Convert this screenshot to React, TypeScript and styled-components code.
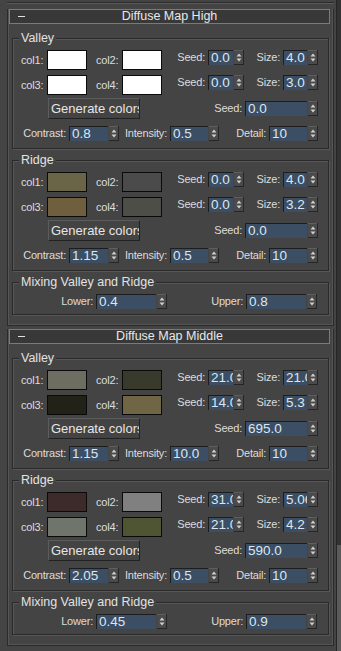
import React from "react";
import styled, { createGlobalStyle } from "styled-components";

const GlobalStyle = createGlobalStyle`
  html, body {
    margin: 0;
    padding: 0;
    background: #444444;
  }
  body {
    font-family: "Liberation Sans", Arial, sans-serif;
  }
`;

type Layer = {
  title: string;
  colors: string[];
  seeds: string[];
  sizes: string[];
  seed: string;
  contrast: string;
  intensity: string;
  detail: string;
};

type MapData = {
  title: string;
  valley: Layer;
  ridge: Layer;
  lower: string;
  upper: string;
};

const maps: MapData[] = [
  {
    title: "Diffuse Map High",
    valley: {
      title: "Valley",
      colors: ["#ffffff", "#ffffff", "#ffffff", "#ffffff"],
      seeds: ["0.0", "0.0"],
      sizes: ["4.0", "3.0"],
      seed: "0.0",
      contrast: "0.8",
      intensity: "0.5",
      detail: "10",
    },
    ridge: {
      title: "Ridge",
      colors: ["#6b6547", "#4b4b4b", "#6f5f3f", "#4c4e47"],
      seeds: ["0.0", "0.0"],
      sizes: ["4.0", "3.2"],
      seed: "0.0",
      contrast: "1.15",
      intensity: "0.5",
      detail: "10",
    },
    lower: "0.4",
    upper: "0.8",
  },
  {
    title: "Diffuse Map Middle",
    valley: {
      title: "Valley",
      colors: ["#6d6d61", "#383b2b", "#222219", "#706545"],
      seeds: ["21.0", "14.0"],
      sizes: ["21.0", "5.3"],
      seed: "695.0",
      contrast: "1.15",
      intensity: "10.0",
      detail: "10",
    },
    ridge: {
      title: "Ridge",
      colors: ["#3d2a2b", "#808080", "#6f756a", "#4f5532"],
      seeds: ["31.0", "21.0"],
      sizes: ["5.06", "4.2"],
      seed: "590.0",
      contrast: "2.05",
      intensity: "0.5",
      detail: "10",
    },
    lower: "0.45",
    upper: "0.9",
  },
];

const Screen = styled.div`
  display: flex;
  width: 341px;
  height: 651px;
  overflow: hidden;
  background: #444444;
`;

const Column = styled.div`
  width: 336px;
  flex: none;
`;

const PrevEdge = styled.div`
  margin: 2px 2px 5px 7px;
  height: 0;
  border-top: 1px solid #2b2b2b;
  border-bottom: 1px solid #5a5a5a;
`;

const ScrollTrack = styled.div`
  width: 5px;
  flex: none;
  background: #333333;
  border-left: 1px solid #262626;
`;

const ScrollThumb = styled.div`
  margin-top: 545px;
  height: 106px;
  background: #5a5a5a;
`;

const RolloutBox = styled.section`
  width: 327px;
  box-sizing: border-box;
  margin: 0 0 3px 7px;
  padding: 0 3px 10px 1px;
  border: 1px solid #2a2a2a;
  border-top: none;
  box-shadow: inset 1px 0 0 #555555, inset -1px 0 0 #555555,
    inset 0 -1px 0 #555555;
`;

const Header = styled.div`
  display: grid;
  grid-template-columns: 24px 1fr 24px;
  align-items: center;
  height: 15px;
  box-sizing: border-box;
  border: 1px solid #7a7a7a;
  background: #383838;
  color: #e8e8e8;
  font-size: 12.5px;
`;

const Collapse = styled.span`
  width: 7px;
  height: 1px;
  margin-left: 8px;
  background: #e0e0e0;
`;

const HeaderTitle = styled.span`
  text-align: center;
  line-height: 13px;
  white-space: nowrap;
`;

const Group = styled.div<{ $gap: number; $pad: number }>`
  width: 317px;
  box-sizing: border-box;
  margin: ${(p) => p.$gap}px 0 0 3px;
  padding-bottom: ${(p) => p.$pad}px;
  border: 1px solid #2a2a2a;
  box-shadow: inset 1px 1px 0 #575757, 1px 1px 0 #575757;
`;

const GroupTitle = styled.div`
  width: fit-content;
  margin: -8px 0 5px 6px;
  padding: 0 2px;
  background: #444444;
  color: #e2e2e2;
  font-size: 12.5px;
  line-height: 14px;
  white-space: nowrap;
`;

const Row = styled.div<{ $top?: number; $left?: number; $top_align?: boolean }>`
  display: flex;
  align-items: ${(p) => (p.$top_align ? "flex-start" : "center")};
  margin-top: ${(p) => p.$top ?? 0}px;
  padding-left: ${(p) => p.$left ?? 0}px;
`;

const ColLabel = styled.span<{ $gap?: number }>`
  width: 26px;
  margin-left: ${(p) => p.$gap ?? 0}px;
  color: #dcdcdc;
  font-size: 11px;
  line-height: 20px;
  letter-spacing: -0.2px;
  white-space: nowrap;
`;

const Swatch = styled.div<{ $color: string }>`
  width: 40px;
  height: 20px;
  box-sizing: border-box;
  border: 1px solid #0a0a0a;
  background: ${(p) => p.$color};
`;

const FieldWrap = styled.div`
  display: flex;
  align-items: center;
  height: 15px;
`;

const FieldLabel = styled.span<{ $w: number }>`
  width: ${(p) => p.$w}px;
  box-sizing: border-box;
  padding-right: 2px;
  text-align: right;
  color: #dcdcdc;
  font-size: 11px;
  line-height: 15px;
  letter-spacing: -0.2px;
  white-space: nowrap;
`;

const ValueBox = styled.div<{ $w: number }>`
  width: ${(p) => p.$w}px;
  height: 15px;
  margin-left: 1px;
  box-sizing: border-box;
  padding-left: 2px;
  background: #3b4e63;
  border-top: 1px solid #1d1d1d;
  border-left: 1px solid #1d1d1d;
  color: #dbe6f1;
  font-size: 13.5px;
  line-height: 14px;
  overflow: hidden;
  white-space: nowrap;
`;

const SpinBox = styled.svg`
  display: block;
  margin-left: 1px;
  flex: none;
`;

const GenButton = styled.div`
  width: 92px;
  height: 21px;
  box-sizing: border-box;
  padding-left: 2px;
  background: #434343;
  border: 1px solid;
  border-color: #5c5c5c #222222 #222222 #5c5c5c;
  color: #e6e6e6;
  font-size: 13px;
  line-height: 19px;
  overflow: hidden;
  white-space: nowrap;
`;

const Spinner = () => (
  <SpinBox width="10" height="15" viewBox="0 0 10 15">
    <rect x="0" y="0" width="10" height="15" fill="#4a4a4a" />
    <rect x="0" y="0" width="10" height="1" fill="#5e5e5e" />
    <rect x="0" y="14" width="10" height="1" fill="#262626" />
    <rect x="9" y="0" width="1" height="15" fill="#262626" />
    <polygon points="2.5,6.5 5,3.5 7.5,6.5" fill="#cfcfcf" />
    <polygon points="2.5,8.5 5,11.5 7.5,8.5" fill="#cfcfcf" />
  </SpinBox>
);

const Field = ({
  label,
  value,
  labelWidth,
  inputWidth,
}: {
  label: string;
  value: string;
  labelWidth: number;
  inputWidth: number;
}) => (
  <FieldWrap>
    <FieldLabel $w={labelWidth}>{label}</FieldLabel>
    <ValueBox $w={inputWidth}>{value}</ValueBox>
    <Spinner />
  </FieldWrap>
);

const ColorGroup = ({ data, gap }: { data: Layer; gap: number }) => (
  <Group $gap={gap} $pad={7}>
    <GroupTitle>{data.title}</GroupTitle>
    {[0, 1].map((i) => (
      <Row key={i} $left={8} $top={i === 0 ? 0 : 5} $top_align>
        <ColLabel>col{i * 2 + 1}:</ColLabel>
        <Swatch $color={data.colors[i * 2]} />
        <ColLabel $gap={9}>col{i * 2 + 2}:</ColLabel>
        <Swatch $color={data.colors[i * 2 + 1]} />
        <Field label="Seed:" value={data.seeds[i]} labelWidth={45} inputWidth={25} />
        <Field label="Size:" value={data.sizes[i]} labelWidth={38} inputWidth={24} />
      </Row>
    ))}
    <Row $top={3} $left={35}>
      <GenButton>Generate colors</GenButton>
      <Field label="Seed:" value={data.seed} labelWidth={104} inputWidth={62} />
    </Row>
    <Row $top={7}>
      <Field label="Contrast:" value={data.contrast} labelWidth={55} inputWidth={39} />
      <Field label="Intensity:" value={data.intensity} labelWidth={50} inputWidth={38} />
      <Field label="Detail:" value={data.detail} labelWidth={49} inputWidth={38} />
    </Row>
  </Group>
);

const Rollout = ({ map }: { map: MapData }) => (
  <RolloutBox>
    <Header>
      <Collapse />
      <HeaderTitle>{map.title}</HeaderTitle>
      <span />
    </Header>
    <ColorGroup data={map.valley} gap={14} />
    <ColorGroup data={map.ridge} gap={11} />
    <Group $gap={11} $pad={5}>
      <GroupTitle>Mixing Valley and Ridge</GroupTitle>
      <Row>
        <Field label="Lower:" value={map.lower} labelWidth={82} inputWidth={60} />
        <Field label="Upper:" value={map.upper} labelWidth={78} inputWidth={60} />
      </Row>
    </Group>
  </RolloutBox>
);

export default function App() {
  return (
    <>
      <GlobalStyle />
      <Screen>
        <Column>
          <PrevEdge />
          {maps.map((m) => (
            <Rollout key={m.title} map={m} />
          ))}
        </Column>
        <ScrollTrack>
          <ScrollThumb />
        </ScrollTrack>
      </Screen>
    </>
  );
}
